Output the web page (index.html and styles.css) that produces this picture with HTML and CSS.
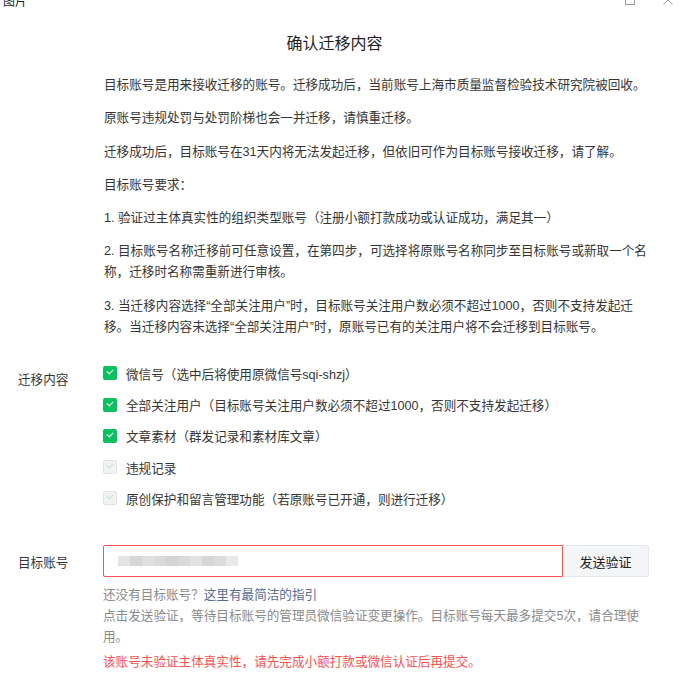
FILE: index.html
```html
<!DOCTYPE html>
<html>
<head>
    <title>确认迁移内容</title>
    <link rel="stylesheet" href="styles.css">
</head>
<body>
    <div class="titlebar">
        <span class="app-name">图片</span>
        <div class="win-ctrls">
            <svg class="win-icon" width="12" height="12" viewBox="0 0 12 12"><rect x="1.5" y="1.5" width="9" height="9" fill="none" stroke="#9a9a9a" stroke-width="1"/></svg>
            <svg class="win-icon" width="12" height="12" viewBox="0 0 12 12"><path d="M1.5 1.5 L10.5 10.5 M10.5 1.5 L1.5 10.5" stroke="#9a9a9a" stroke-width="1"/></svg>
        </div>
    </div>

    <h1 class="title">确认迁移内容</h1>

    <div class="notice">
        <p>目标账号是用来接收迁移的账号。迁移成功后，当前账号上海市质量监督检验技术研究院被回收。</p>
        <p>原账号违规处罚与处罚阶梯也会一并迁移，请慎重迁移。</p>
        <p>迁移成功后，目标账号在31天内将无法发起迁移，但依旧可作为目标账号接收迁移，请了解。</p>
        <p>目标账号要求：</p>
        <p>1. 验证过主体真实性的组织类型账号（注册小额打款成功或认证成功，满足其一）</p>
        <p>2. 目标账号名称迁移前可任意设置，在第四步，可选择将原账号名称同步至目标账号或新取一个名称，迁移时名称需重新进行审核。</p>
        <p>3. 当迁移内容选择“全部关注用户”时，目标账号关注用户数必须不超过1000，否则不支持发起迁移。当迁移内容未选择“全部关注用户”时，原账号已有的关注用户将不会迁移到目标账号。</p>
    </div>

    <div class="form-row options-row">
        <div class="form-label">迁移内容</div>
        <div class="form-body">
            <label class="check"><span class="box on"></span>微信号（选中后将使用原微信号sqi-shzj）</label>
            <label class="check"><span class="box on"></span>全部关注用户（目标账号关注用户数必须不超过1000，否则不支持发起迁移）</label>
            <label class="check"><span class="box on"></span>文章素材（群发记录和素材库文章）</label>
            <label class="check"><span class="box off"></span>违规记录</label>
            <label class="check"><span class="box off"></span>原创保护和留言管理功能（若原账号已开通，则进行迁移）</label>
        </div>
    </div>

    <div class="form-row account-row">
        <div class="form-label">目标账号</div>
        <div class="form-body">
            <div class="input-group">
                <div class="input error">
                    <span class="blur">
                        <i style="background:#e4e4e4"></i><i style="background:#d6d6d6"></i><i style="background:#dfdfdf"></i><i style="background:#dadada"></i><i style="background:#d4d4d2"></i><i style="background:#d8d9d9"></i><i style="background:#e2e2e3"></i><i style="background:#d8d7d6"></i><i style="background:#dcdcdf"></i><i style="background:#e8e9e9"></i>
                    </span>
                </div>
                <button class="send-btn">发送验证</button>
            </div>
            <div class="hint hint-first">还没有目标账号？<a href="#">这里有最简洁的指引</a></div>
            <div class="hint">点击发送验证，等待目标账号的管理员微信验证变更操作。目标账号每天最多提交5次，请合理使用。</div>
            <div class="error-msg">该账号未验证主体真实性，请先完成小额打款或微信认证后再提交。</div>
        </div>
    </div>
</body>
</html>
```

FILE: styles.css
```css
body {
    margin: 0;
    font-family: "Liberation Sans", "Noto Sans CJK SC", sans-serif;
    font-size: 12.6px;
    color: #353535;
    background: #fff;
    width: 680px;
}
.titlebar {
    display: flex;
    justify-content: space-between;
    align-items: center;
    height: 14px;
    margin-top: -7px;
    padding: 0 6px 0 3px;
    font-size: 12px;
    color: #222;
}
.win-ctrls {
    display: flex;
    gap: 26px;
}
.title {
    margin: 25px 11px 19px 0;
    text-align: center;
    font-size: 16px;
    font-weight: normal;
    line-height: 24px;
    color: #222;
}
.notice {
    margin-left: 104px;
    width: 550px;
}
.notice p {
    margin: 0 0 12.3px;
    line-height: 21px;
}
.form-row {
    display: flex;
}
.form-label {
    width: 85px;
    padding-left: 18px;
    flex-shrink: 0;
    box-sizing: border-box;
}
.options-row {
    margin-top: 20px;
}
.options-row .form-label {
    padding-top: 12px;
    line-height: 21px;
}
.form-body {
    width: 546px;
}
.check {
    display: flex;
    align-items: center;
    height: 31.25px;
    gap: 9px;
}
.box {
    width: 14px;
    height: 14px;
    border-radius: 2px;
    box-sizing: border-box;
    position: relative;
    margin-left: 18px;
}
.box.on {
    background: #07c160;
}
.box.off {
    background: #f2f2f2;
    border: 1px solid #e3e3e3;
}
.box::after {
    content: "";
    position: absolute;
    left: 4px;
    top: 3px;
    width: 5px;
    height: 3px;
    border-left: 1px solid #fff;
    border-bottom: 1px solid #fff;
    transform: rotate(-45deg);
}
.box.off::after {
    left: 3px;
    top: 2px;
    border-color: #bfe6cf;
}
.account-row {
    margin-top: 31px;
}
.account-row .form-label {
    line-height: 32px;
    padding-top: 2px;
}
.account-row .form-body {
    padding-left: 18px;
    width: 546px;
}
.input-group {
    display: flex;
    height: 32px;
    width: 546px;
}
.input {
    flex: 1;
    border: 1px solid #fa5151;
    border-radius: 2px 0 0 2px;
    display: flex;
    align-items: center;
    padding-left: 14px;
}
.blur {
    display: flex;
    height: 10px;
}
.blur i {
    width: 12px;
    height: 10px;
}
.send-btn {
    width: 86px;
    border: 1px solid #e4e6eb;
    border-left: none;
    border-radius: 0 3px 3px 0;
    background: #f4f5f7;
    font-family: inherit;
    font-size: 13px;
    color: #222;
}
.hint {
    color: #8a8a8a;
    line-height: 21px;
    width: 546px;
}
.hint-first {
    margin-top: 8px;
}
.hint a {
    color: #576b95;
    text-decoration: none;
}
.error-msg {
    color: #fa5151;
    line-height: 21px;
    margin-top: 4px;
}
```
